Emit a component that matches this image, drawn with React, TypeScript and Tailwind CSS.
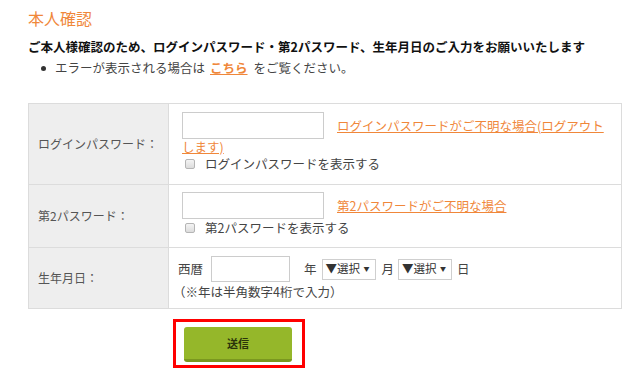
import React from 'react';

const orange = 'text-[#f0873a]';

const Checkbox = () => (
  <span className="inline-block w-[10px] h-[10px] border border-[#b5b5b5] rounded-[2px] bg-[linear-gradient(#f4f4f4,#dcdcdc)] ml-[3px] mr-[10px]" />
);

const Select = () => (
  <span className="inline-flex items-center h-[21px] w-[54px] border border-[#cfcfcf] bg-white pl-[3px] pr-[5px] text-[11.5px] text-[#333] justify-between">
    <span>▼選択</span>
    <span className="text-[6px] leading-none">▼</span>
  </span>
);

const App = () => {
  return (
    <div className="w-[640px] h-[372px] bg-white pl-[28px] pr-[18px] text-[#333] font-['Noto_Sans_CJK_JP','Noto_Sans',sans-serif]">
      <h1 className={`pt-[10px] text-[16px] leading-[17px] ${orange}`}>本人確認</h1>

      <p className="mt-[13px] text-[12.5px] leading-[14px] font-bold text-[#111] whitespace-nowrap">
        ご本人様確認のため、ログインパスワード・第2パスワード、生年月日のご入力をお願いいたします
      </p>

      <ul className="mt-[7px] text-[12.5px] leading-[14px] text-[#444]">
        <li className="flex items-center">
          <span className="w-[5px] h-[5px] rounded-full bg-[#333] ml-[13px] mr-[9px]" />
          エラーが表示される場合は
          <a href="#" className={`ml-[5px] mr-[6px] font-bold underline ${orange}`}>こちら</a>
          をご覧ください。
        </li>
      </ul>

      <div className="mt-[28px] border border-[#dcdcdc] grid grid-cols-[140px_1fr] text-[12.5px] text-[#444]">
        {/* ログインパスワード */}
        <div className="h-[80px] bg-[#eeeeee] border-r border-[#dcdcdc] flex items-center pl-[9px] text-[12px] text-[#555]">
          ログインパスワード：
        </div>
        <div className="h-[80px] pl-[13px] pt-[8px]">
          <div className="flex items-center gap-[13px]">
            <input className="w-[142px] h-[27px] border border-[#cccccc] bg-white" />
            <a href="#" className={`underline leading-[14px] ${orange}`}>ログインパスワードがご不明な場合(ログアウト</a>
          </div>
          <a href="#" className={`block underline leading-[14px] mt-[1px] ${orange}`}>します)</a>
          <label className="flex items-center leading-[16px] mt-[2px]">
            <Checkbox />
            ログインパスワードを表示する
          </label>
        </div>

        {/* 第2パスワード */}
        <div className="h-[63px] bg-[#eeeeee] border-r border-t border-[#dcdcdc] flex items-center pl-[9px] text-[12px] text-[#555]">
          第2パスワード：
        </div>
        <div className="h-[63px] border-t border-[#dcdcdc] pl-[13px] pt-[7px]">
          <div className="flex items-center gap-[13px]">
            <input className="w-[142px] h-[27px] border border-[#cccccc] bg-white" />
            <a href="#" className={`underline leading-[14px] ${orange}`}>第2パスワードがご不明な場合</a>
          </div>
          <label className="flex items-center leading-[16px] mt-[1px]">
            <Checkbox />
            第2パスワードを表示する
          </label>
        </div>

        {/* 生年月日 */}
        <div className="h-[61px] bg-[#eeeeee] border-r border-t border-[#dcdcdc] flex items-center pl-[9px] text-[12px] text-[#555]">
          生年月日：
        </div>
        <div className="h-[61px] border-t border-[#dcdcdc] pl-[9px] pt-[8px]">
          <div className="flex items-center">
            <span>西暦</span>
            <input className="ml-[8px] w-[79px] h-[26px] border border-[#cccccc] bg-white" />
            <span className="ml-[14px] mr-[5px]">年</span>
            <Select />
            <span className="ml-[6px] mr-[4px]">月</span>
            <Select />
            <span className="ml-[5px]">日</span>
          </div>
          <p className="mt-[2px] leading-[16px] ml-[-5px]">（※年は半角数字4桁で入力）</p>
        </div>
      </div>

      <div className="mt-[10px] ml-[145px] w-[132px] border-[3px] border-[#ff0000] pl-[8px] pr-[10px] pt-[5px] pb-[3px]">
        <button className="w-[108px] h-[35px] rounded-[3px] bg-[#95b72a] border-b-[3px] border-[#7a971f] text-[11px] font-bold">
          <span className="text-[#2a330a]">送信</span>
        </button>
      </div>
    </div>
  );
};

export default App;
